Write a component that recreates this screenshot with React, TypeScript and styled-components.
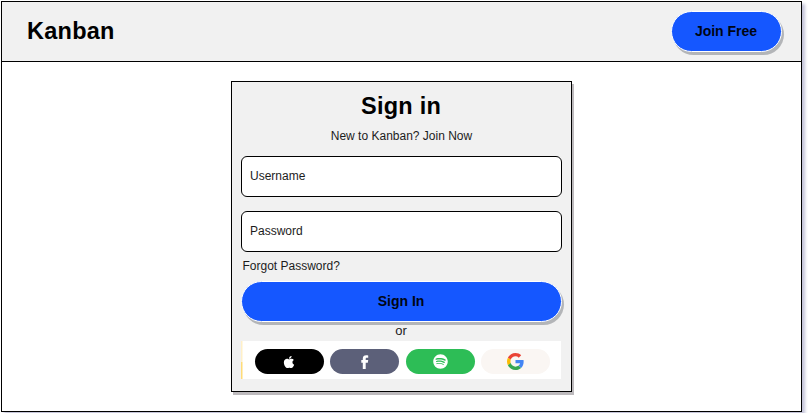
import React from "react";
import styled, { createGlobalStyle } from "styled-components";
import { FaApple, FaSpotify } from "react-icons/fa";

const GlobalStyle = createGlobalStyle`
  * { box-sizing: border-box; }
  body {
    margin: 0;
    background: #fff;
    color: #1c1c1c;
    font-family: "Liberation Sans", Arial, sans-serif;
    font-size: 12px;
    overflow: hidden;
  }
`;

const Page = styled.div`
  width: 801px;
  height: 411px;
  margin: 1px;
  border: 1px solid #000;
  background: #fff;
  box-shadow: 3px 3px 3px #c3c3d8;
`;

const Header = styled.header`
  display: flex;
  align-items: center;
  justify-content: space-between;
  height: 60px;
  padding: 0 19px 0 25px;
  border-bottom: 1px solid #000;
  background: #f1f1f1;
`;

const Brand = styled.div`
  padding-bottom: 2px;
  color: #000;
  font-size: 23.5px;
  line-height: 28px;
  font-weight: 700;
  letter-spacing: 0.25px;
`;

const Button = styled.button<{ $width: number }>`
  flex: none;
  width: ${(p) => p.$width}px;
  height: 41px;
  padding: 0 1px 1px 0;
  border: 1px solid #fff;
  border-radius: 21px;
  background: #1557ff;
  box-shadow: 2px 3px 0 #b3b5b8;
  color: #000614;
  font: 700 14px "Liberation Sans", Arial, sans-serif;
`;

const Card = styled.main`
  display: flex;
  flex-direction: column;
  width: 341px;
  height: 311px;
  margin: 19px 0 0 229px;
  padding: 0 9px;
  border: 1px solid #000;
  background: #f1f1f1;
  box-shadow: 2px 3px 0 #bdbabd;
`;

const Title = styled.h1`
  margin: 10px 1px 0 0;
  color: #000;
  font-size: 23.5px;
  line-height: 28px;
  text-align: center;
  letter-spacing: 0.25px;
`;

const Hint = styled.p`
  margin: 9px 0 13px;
  line-height: 14px;
  text-align: center;
`;

const Field = styled.label`
  display: flex;
  align-items: center;
  height: 41px;
  margin-bottom: 14px;
  padding: 0 8px 2px;
  border: 1px solid #000;
  border-radius: 6px;
  background: #fff;
`;

const Forgot = styled.a`
  margin: -7px 0 8px 1.5px;
  line-height: 14px;
`;

const Divider = styled.div`
  height: 19px;
  padding: 2px 1px 0 0;
  line-height: 14px;
  font-size: 13px;
  text-align: center;
`;

const SocialRow = styled.div`
  display: flex;
  align-items: center;
  gap: 6.5px;
  height: 38px;
  margin: 0 1px 0 0;
  padding: 3px 0 0 13.5px;
  background-color: #fff;
  background-image: linear-gradient(to bottom, #fff0c8 55%, #ffdc78 55%);
  background-size: 1.5px 100%;
  background-repeat: no-repeat;
`;

const Social = styled.a<{ $color: string }>`
  display: flex;
  align-items: center;
  justify-content: center;
  width: 69px;
  height: 25.5px;
  border-radius: 13px;
  background: ${(p) => p.$color};
  color: #fff;
`;

const FacebookIcon = () => (
  <svg width="8" height="14" viewBox="0 0 8 14">
    <path fill="#fff" d="M1.8 14V7.7H.3V5.1h1.5V3.6C1.8 1.3 3 .2 5.2.2c.8 0 1.5.1 2 .2v2.3H5.9c-.9 0-1.2.4-1.2 1.2v1.2h2.5l-.4 2.6H4.7V14z" />
  </svg>
);

const GoogleIcon = () => (
  <svg width="17" height="17" viewBox="0 0 48 48">
    <path fill="#EA4335" d="M24 9.5c3.54 0 6.71 1.22 9.21 3.6l6.85-6.85C35.9 2.38 30.47 0 24 0 14.62 0 6.51 5.38 2.56 13.22l7.98 6.19C12.43 13.72 17.74 9.5 24 9.5z" />
    <path fill="#4285F4" d="M46.98 24.55c0-1.57-.15-3.09-.38-4.55H24v9.02h12.94c-.58 2.96-2.26 5.48-4.78 7.18l7.73 6c4.51-4.18 7.09-10.36 7.09-17.65z" />
    <path fill="#FBBC05" d="M10.53 28.59c-.48-1.45-.76-2.99-.76-4.59s.27-3.14.76-4.59l-7.98-6.19C.92 16.46 0 20.12 0 24c0 3.88.92 7.54 2.56 10.78l7.97-6.19z" />
    <path fill="#34A853" d="M24 48c6.48 0 11.93-2.13 15.89-5.81l-7.73-6c-2.15 1.45-4.92 2.3-8.16 2.3-6.26 0-11.57-4.22-13.47-9.91l-7.98 6.19C6.51 42.62 14.62 48 24 48z" />
  </svg>
);

export default function App() {
  return (
    <>
      <GlobalStyle />
      <Page>
        <Header>
          <Brand>Kanban</Brand>
          <Button $width={111}>Join Free</Button>
        </Header>
        <Card>
          <Title>Sign in</Title>
          <Hint>New to Kanban? Join Now</Hint>
          <Field>Username</Field>
          <Field>Password</Field>
          <Forgot>Forgot Password?</Forgot>
          <Button $width={321}>Sign In</Button>
          <Divider>or</Divider>
          <SocialRow>
            <Social $color="#000"><FaApple size={14} /></Social>
            <Social $color="#5c6079"><FacebookIcon /></Social>
            <Social $color="#2dbd56"><FaSpotify size={15} /></Social>
            <Social $color="#faf6f3"><GoogleIcon /></Social>
          </SocialRow>
        </Card>
      </Page>
    </>
  );
}
